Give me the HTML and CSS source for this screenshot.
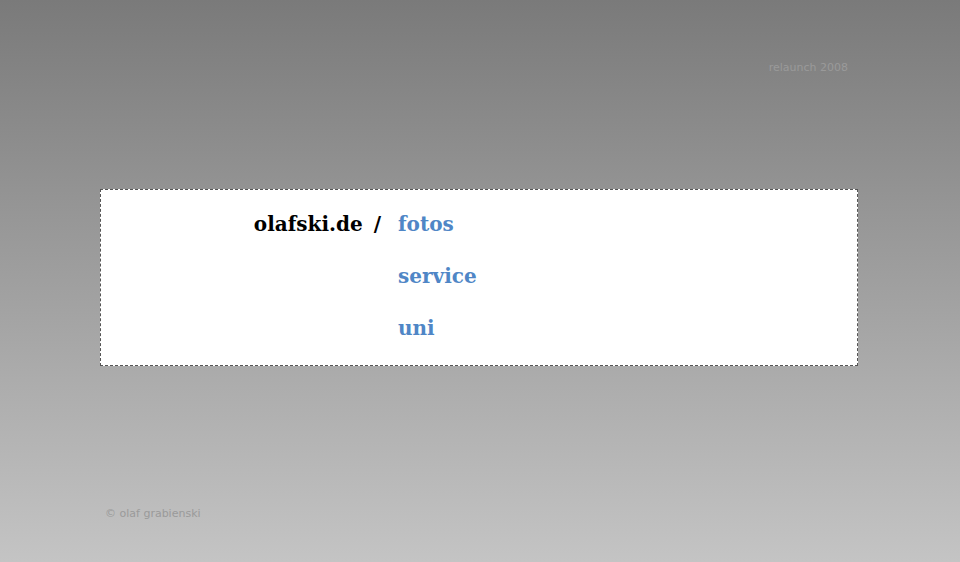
FILE: index.html
```html
<!DOCTYPE html>
<html>
<head>
<meta charset="utf-8">
<link rel="stylesheet" href="styles.css">
</head>
<body>
<div class="page">
  <div class="relaunch">relaunch 2008</div>
  <div class="box">
    <div class="brand">olafski.de<span class="slash">/</span></div>
    <ul class="nav">
      <li><a href="#">fotos</a></li>
      <li><a href="#">service</a></li>
      <li><a href="#">uni</a></li>
    </ul>
  </div>
  <div class="copy">© olaf grabienski</div>
</div>
</body>
</html>
```
FILE: styles.css
```css
html, body { margin: 0; padding: 0; height: 100%; }
body {
  background: linear-gradient(to bottom, #7a7a7a 0%, #c4c4c4 100%);
  font-family: "DejaVu Sans", Verdana, sans-serif;
}
.page {
  width: 758px;
  margin-left: 100px;
  padding-top: 61px;
}
.relaunch {
  font-size: 11px;
  color: #9a9a9a;
  text-align: right;
  padding-right: 10px;
  line-height: 14px;
  height: 14px;
}
.box {
  margin-top: 114px;
  background: #fff;
  border: 1px dashed #555;
  display: flex;
  box-sizing: border-box;
  height: 177px;
  padding-top: 17px;
}
.brand {
  width: 280px;
  text-align: right;
  font-family: "DejaVu Serif", Georgia, serif;
  font-weight: bold;
  font-size: 20px;
  line-height: 34px;
  color: #000;
}
.slash { margin-left: 11px; }
.nav {
  list-style: none;
  margin: 0 0 0 17px;
  padding: 0;
}
.nav li {
  font-family: "DejaVu Serif", Georgia, serif;
  font-weight: bold;
  font-size: 20px;
  line-height: 34px;
  height: 52px;
}
.nav a { color: #4f86c6; text-decoration: none; }
.copy {
  margin-top: 141px;
  margin-left: 5px;
  font-size: 11px;
  color: #9a9a9a;
  line-height: 14px;
}
```
